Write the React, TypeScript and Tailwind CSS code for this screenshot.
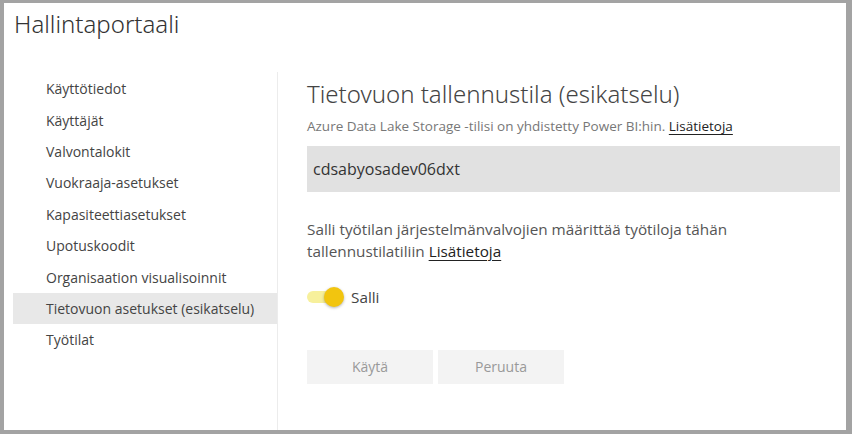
const navItems = [
  'Käyttötiedot',
  'Käyttäjät',
  'Valvontalokit',
  'Vuokraaja-asetukset',
  'Kapasiteettiasetukset',
  'Upotuskoodit',
  'Organisaation visualisoinnit',
  'Tietovuon asetukset (esikatselu)',
  'Työtilat',
];

const active = 'Tietovuon asetukset (esikatselu)';

export default function App() {
  return (
    <div
      className="h-[434px] w-[852px] overflow-hidden bg-[#a3a3a3] pb-[4px] pl-[4px] pr-[6px] pt-[3px] text-[#333]"
      style={{ fontFamily: '"Open Sans", "Noto Sans", sans-serif' }}
    >
      <div className="flex h-full flex-col bg-white">
        <h1
          className="h-[69px] pl-[10px] pt-[3px] text-[24px] font-light leading-[36px] text-[#333]"
          style={{ fontFamily: '"Noto Sans", "Open Sans", sans-serif' }}
        >
          Hallintaportaali
        </h1>
        <div className="flex flex-1">
          <nav className="w-[274px] shrink-0 border-r border-[#ececec] pl-[9px] pt-[1px]">
            {navItems.map((item) => (
              <div
                key={item}
                className={
                  'flex h-[31.4px] items-center pl-[33px] text-[14px] text-[#444] ' +
                  (item === active ? 'bg-[#e8e8e8]' : '')
                }
              >
                {item}
              </div>
            ))}
          </nav>
          <main className="flex-1 pl-[29px] pr-[6px] pt-[5px]">
            <h2
              className="text-[24px] font-light leading-[34px] text-[#444]"
              style={{ fontFamily: '"Noto Sans", "Open Sans", sans-serif' }}
            >
              Tietovuon tallennustila (esikatselu)
            </h2>
            <p className="mt-[6px] text-[13.5px] leading-[18px] text-[#777]">
              Azure Data Lake Storage -tilisi on yhdistetty Power BI:hin.{' '}
              <span className="text-[#222] underline underline-offset-[3px]">Lisätietoja</span>
            </p>
            <div className="mt-[11px] flex h-[46px] items-center bg-[#e1e1e1] pl-[6px] text-[16px] text-[#333]">
              cdsabyosadev06dxt
            </div>
            <p className="mt-[26px] w-[450px] text-[15.3px] leading-[22px] text-[#555]">
              Salli työtilan järjestelmänvalvojien määrittää työtiloja tähän tallennustilatiliin{' '}
              <span className="text-[#222] underline underline-offset-[3px]">Lisätietoja</span>
            </p>
            <div className="mt-[24px] flex items-center gap-[7px]">
              <div className="relative h-[20px] w-[37px]">
                <div className="absolute left-0 top-[4px] h-[12px] w-[34px] rounded-full bg-[#f7f09c]" />
                <div className="absolute right-0 top-0 h-[20px] w-[20px] rounded-full bg-[#f2c50f] shadow-[0_1px_3px_rgba(0,0,0,0.3)]" />
              </div>
              <span className="text-[15.3px] text-[#444]">Salli</span>
            </div>
            <div className="mt-[41px] flex gap-[5px]">
              <button className="h-[34px] w-[126px] bg-[#f3f3f3] text-[14px] text-[#999]">Käytä</button>
              <button className="h-[34px] w-[126px] bg-[#f3f3f3] text-[14px] text-[#999]">Peruuta</button>
            </div>
          </main>
        </div>
      </div>
    </div>
  );
}
